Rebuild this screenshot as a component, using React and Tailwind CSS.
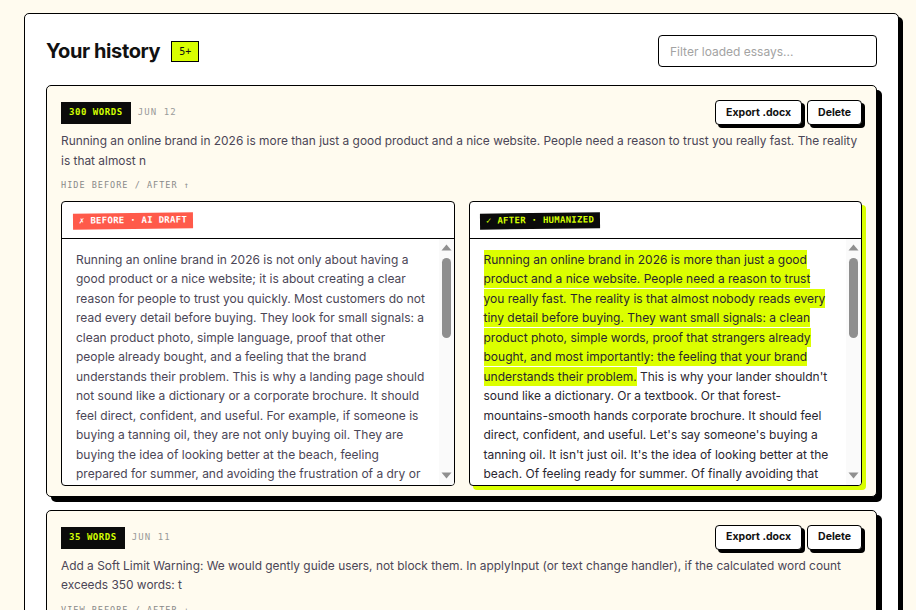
import React from "react";

const mono = { fontFamily: '"DejaVu Sans Mono", "Liberation Mono", monospace' };

const beforeText =
  "Running an online brand in 2026 is not only about having a good product or a nice website; it is about creating a clear reason for people to trust you quickly. Most customers do not read every detail before buying. They look for small signals: a clean product photo, simple language, proof that other people already bought, and a feeling that the brand understands their problem. This is why a landing page should not sound like a dictionary or a corporate brochure. It should feel direct, confident, and useful. For example, if someone is buying a tanning oil, they are not only buying oil. They are buying the idea of looking better at the beach, feeling prepared for summer, and avoiding the frustration of a dry or uneven tan. Good copy speaks to that feeling first and explains the product second.";

const afterMarked =
  "Running an online brand in 2026 is more than just a good product and a nice website. People need a reason to trust you really fast. The reality is that almost nobody reads every tiny detail before buying. They want small signals: a clean product photo, simple words, proof that strangers already bought, and most importantly: the feeling that your brand understands their problem.";

const afterRest =
  " This is why your lander shouldn't sound like a dictionary. Or a textbook. Or that forest-mountains-smooth hands corporate brochure. It should feel direct, confident, and useful. Let's say someone's buying a tanning oil. It isn't just oil. It's the idea of looking better at the beach. Of feeling ready for summer. Of finally avoiding that dry, patchy tan. Good copy hits the feeling first and the product second.";

function Scrollbar() {
  return (
    <div className="w-[15px] shrink-0 bg-[#fafafa] flex flex-col items-center pt-[5px] pb-[6px]">
      <svg width="11" height="7" viewBox="0 0 11 7">
        <path d="M5.5 0.5 L10.5 6.5 L0.5 6.5 Z" fill="#8f8f8f" />
      </svg>
      <div className="w-[9px] h-[80px] mt-[7px] rounded-full bg-[#8f8f8f]" />
      <div className="flex-1" />
      <svg width="11" height="7" viewBox="0 0 11 7">
        <path d="M0.5 0.5 L10.5 0.5 L5.5 6.5 Z" fill="#8f8f8f" />
      </svg>
    </div>
  );
}

function CardHeader({ words, date }) {
  return (
    <div className="flex items-start justify-between">
      <div className="flex items-center gap-[7px] mt-[2px]">
        <span
          className="bg-[#0b0b0b] text-[#d4ff00] text-[9px] font-bold tracking-[0.06em] h-[22px] px-[8px] flex items-center"
          style={mono}
        >
          {words}
        </span>
        <span className="text-[9px] tracking-[0.12em] text-[#9a9a9a]" style={mono}>
          {date}
        </span>
      </div>
      <div className="flex gap-[5px]">
        <button className="h-[25px] px-[10px] bg-white border border-black rounded-[4px] shadow-[3px_3px_0_#000] text-[10.5px] font-bold text-[#111]">
          Export .docx
        </button>
        <button className="h-[25px] px-[10px] bg-white border border-black rounded-[4px] shadow-[3px_3px_0_#000] text-[10.5px] font-bold text-[#111]">
          Delete
        </button>
      </div>
    </div>
  );
}

export default function App() {
  return (
    <div
      className="min-h-screen bg-[#fffbef] pt-[13px] pl-[24px] pr-[17px] text-[#111]"
      style={{ fontFamily: 'Inter, "Noto Sans", sans-serif' }}
    >
      <div className="bg-white border border-black rounded-[5px] shadow-[4px_4px_0_#000] px-[21px] pt-[21px] pb-[20px]">
        {/* Header */}
        <div className="flex items-center justify-between mb-[18px]">
          <div className="flex items-center gap-[11px]">
            <h1 className="text-[20px] font-bold tracking-[-0.02em] text-[#111]">Your history</h1>
            <span
              className="bg-[#d9ff00] border border-black text-[10px] h-[21px] px-[7px] flex items-center"
              style={mono}
            >
              5+
            </span>
          </div>
          <input
            type="text"
            placeholder="Filter loaded essays..."
            className="w-[219px] h-[32px] border border-black rounded-[4px] px-[11px] text-[12px] bg-white placeholder-[#a3a3a3] focus:outline-none"
          />
        </div>

        {/* Card 1 */}
        <div className="bg-[#fffbef] border border-black rounded-[5px] shadow-[5px_5px_0_#000] px-[14px] pt-[14px] pb-[10px]">
          <CardHeader words="300 WORDS" date="JUN 12" />
          <p className="mt-[6px] text-[11.9px] leading-[19.5px] text-[#4b4656]">
            Running an online brand in 2026 is more than just a good product and a nice website. People need a reason to trust you really fast. The reality is that almost n
          </p>
          <div className="mt-[9px] text-[8.5px] tracking-[0.12em] text-[#8a8a8a]" style={mono}>
            HIDE BEFORE / AFTER ↑
          </div>

          <div className="grid grid-cols-2 gap-[14px] mt-[9px]">
            {/* Before */}
            <div className="bg-white border border-black rounded-[4px] overflow-hidden">
              <div className="h-[37px] border-b border-black flex items-center px-[11px] pt-[2px]">
                <span
                  className="bg-[#ff5a4a] text-white text-[9px] font-bold tracking-[0.03em] h-[16px] px-[6px] flex items-center rotate-[-0.6deg]"
                  style={mono}
                >
                  ✗ BEFORE · AI DRAFT
                </span>
              </div>
              <div className="h-[246px] flex">
                <div className="flex-1 overflow-hidden pl-[14px] pr-[13px] pt-[11px] text-[12px] leading-[19.5px] text-[#4b4656]">
                  {beforeText}
                </div>
                <Scrollbar />
              </div>
            </div>

            {/* After */}
            <div className="bg-white border border-black rounded-[4px] overflow-hidden shadow-[4px_4px_0_#d9ff00]">
              <div className="h-[37px] border-b border-black flex items-center px-[10px] pt-[2px]">
                <span
                  className="bg-[#0b0b0b] text-[#d4ff00] text-[9px] font-bold tracking-[0.03em] h-[16px] px-[6px] flex items-center rotate-[-0.6deg]"
                  style={mono}
                >
                  ✓ AFTER · HUMANIZED
                </span>
              </div>
              <div className="h-[246px] flex">
                <div className="flex-1 overflow-hidden pl-[14px] pr-[17px] pt-[11px] text-[12px] leading-[19.5px] text-[#2a2630]">
                  <span className="bg-[#dcff00] py-[2px]">{afterMarked}</span>
                  {afterRest}
                </div>
                <Scrollbar />
              </div>
            </div>
          </div>
        </div>

        {/* Card 2 */}
        <div className="mt-[13px] bg-[#fffbef] border border-black rounded-[5px] shadow-[5px_5px_0_#000] px-[14px] pt-[14px] pb-[12px]">
          <CardHeader words="35 WORDS" date="JUN 11" />
          <p className="mt-[6px] text-[11.9px] leading-[19.5px] text-[#4b4656]">
            Add a Soft Limit Warning: We would gently guide users, not block them. In applyInput (or text change handler), if the calculated word count exceeds 350 words: t
          </p>
          <div className="mt-[9px] text-[8.5px] tracking-[0.12em] text-[#8a8a8a]" style={mono}>
            VIEW BEFORE / AFTER ↓
          </div>
        </div>
      </div>
    </div>
  );
}
